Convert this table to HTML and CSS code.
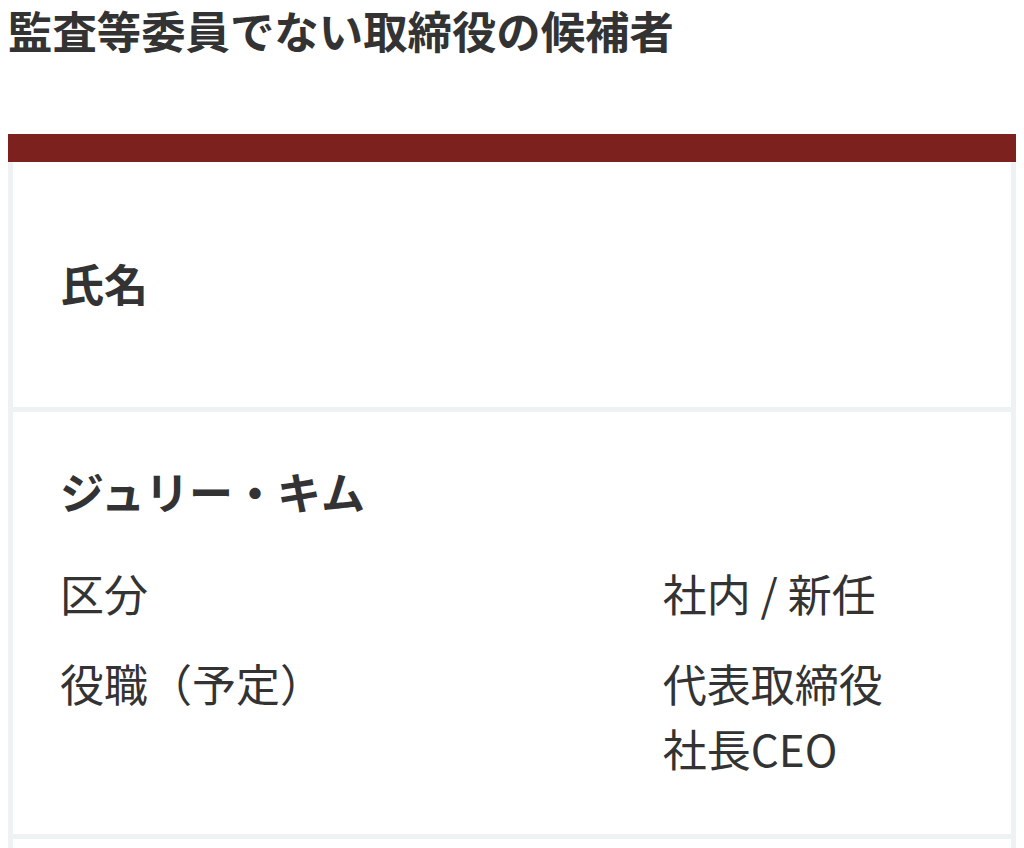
FILE: index.html
```html
<!DOCTYPE html>
<html lang="ja">
<head>
<meta charset="utf-8">
<title>監査等委員でない取締役の候補者</title>
<link rel="stylesheet" href="styles.css">
</head>
<body>
<h2 class="title">監査等委員でない取締役の候補者</h2>
<div class="table">
  <div class="table-head"></div>
  <div class="table-body">
    <div class="row row-head">氏名</div>
    <div class="row">
      <div class="name">ジュリー・キム</div>
      <dl class="info">
        <div class="info-item">
          <dt>区分</dt>
          <dd>社内 / 新任</dd>
        </div>
        <div class="info-item">
          <dt>役職（予定）</dt>
          <dd>代表取締役<br>社長CEO</dd>
        </div>
      </dl>
    </div>
    <div class="row row-next"></div>
  </div>
</div>
</body>
</html>
```

FILE: styles.css
```css
html, body {
  margin: 0;
  padding: 0;
  background: #ffffff;
}

body {
  padding: 0 8px;
  font-family: "Noto Sans CJK JP", "Noto Sans", sans-serif;
  color: #333333;
}

.title {
  margin: 0 0 74px 0;
  font-size: 44.4px;
  line-height: 60px;
  font-weight: 700;
  color: #333333;
}

.table-head {
  height: 28px;
  background: #7d211e;
}

.table-body {
  border-left: 5px solid #eef2f5;
  border-right: 5px solid #eef2f5;
}

.row {
  border-bottom: 5px solid #eef2f5;
  padding: 47px 47px 53px 47px;
  font-size: 44px;
  line-height: 65px;
}

.row-head {
  padding-top: 89px;
  padding-bottom: 91px;
  font-weight: 700;
}

.name {
  font-weight: 700;
  margin-bottom: 37px;
}

.info {
  margin: 0;
  display: flex;
  flex-direction: column;
  gap: 25px;
}

.info-item {
  display: flex;
}

.info-item dt {
  flex: 2;
  margin: 0;
}

.info-item dd {
  flex: 1;
  margin: 0;
}

.row-next {
  height: 120px;
}
```
